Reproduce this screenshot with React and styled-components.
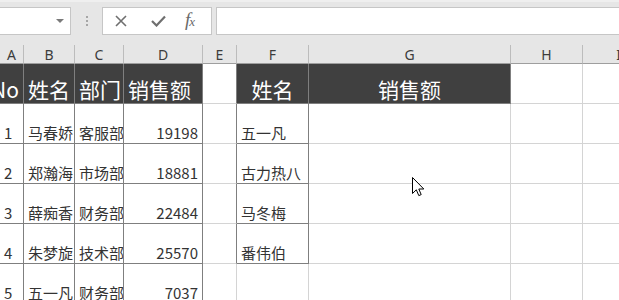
import React from 'react';
import styled, { createGlobalStyle, css } from 'styled-components';

const GlobalStyle = createGlobalStyle`
	html, body {
		margin: 0;
		padding: 0;
		background: #ffffff;
		overflow: hidden;
	}
	body {
		font-family: "Noto Sans", "Noto Sans CJK SC", sans-serif;
	}
`;

const COL_WIDTHS = [24, 51, 49, 79, 34, 72, 202, 72, 72];
const COL_NAMES = ['A', 'B', 'C', 'D', 'E', 'F', 'G', 'H', 'I'];

const GRID = '#d4d4d4';
const TABLE = '#7f7f7f';
const HEAD_FILL = '#404040';

const Page = styled.div`
	width: 619px;
	height: 300px;
	overflow: hidden;
	background: #ffffff;
	display: flex;
	flex-direction: column;
`;

const FormulaBar = styled.div`
	height: 45px;
	flex: none;
	box-sizing: border-box;
	background: #e6e6e6;
	border-top: 2px solid #efefef;
	display: flex;
	align-items: flex-start;
	padding-top: 5px;
`;

const NameBox = styled.div`
	width: 72px;
	height: 28px;
	margin-left: -1px;
	box-sizing: border-box;
	background: #ffffff;
	border: 1px solid #c6c6c6;
	display: flex;
	align-items: center;
	justify-content: flex-end;
	padding-right: 6px;
`;

const DropArrow = styled.span`
	width: 0;
	height: 0;
	border-left: 4px solid transparent;
	border-right: 4px solid transparent;
	border-top: 4px solid #7a7a7a;
`;

const Grip = styled.div`
	width: 31px;
	height: 28px;
	display: flex;
	flex-direction: column;
	align-items: center;
	justify-content: center;
	gap: 2px;
	span {
		width: 2px;
		height: 2px;
		background: #a6a6a6;
	}
`;

const FxButtons = styled.div`
	width: 110px;
	height: 28px;
	box-sizing: border-box;
	background: #ffffff;
	border: 1px solid #c6c6c6;
	display: flex;
	align-items: center;
	padding-left: 12px;
`;

const FxButton = styled.div`
	width: ${ props => props.w }px;
	height: 26px;
	display: flex;
	align-items: center;
	color: #6f6f6f;
`;

const FxText = styled.span`
	font-family: "Liberation Serif", serif;
	font-style: italic;
	font-size: 19px;
	line-height: 20px;
	color: #6a6a6a;
	letter-spacing: -1px;
	span {
		font-size: 13px;
	}
`;

const FormulaInput = styled.div`
	flex: 1;
	height: 28px;
	margin-left: 4px;
	margin-right: -2px;
	box-sizing: border-box;
	background: #ffffff;
	border: 1px solid #c6c6c6;
`;

const Sheet = styled.div`
	position: relative;
	flex: 1;
	display: grid;
	grid-template-columns: ${ COL_WIDTHS.map(w => `${ w }px`).join(' ') };
	grid-template-rows: 19px repeat(6, 40px);
	align-content: start;
`;

const ColHead = styled.div`
	box-sizing: border-box;
	background: #e6e6e6;
	border-right: 1px solid #bcbcbc;
	border-bottom: 1px solid #9e9e9e;
	display: flex;
	align-items: center;
	justify-content: center;
	font-family: "Noto Sans", sans-serif;
	font-size: 14px;
	line-height: 18px;
	color: #3c3c3c;
	padding-top: 1px;
`;

const Cell = styled.div`
	box-sizing: border-box;
	overflow: hidden;
	white-space: nowrap;
	display: flex;
	align-items: flex-end;
	font-family: "Noto Sans CJK SC", "Noto Sans", sans-serif;
	font-size: 15px;
	line-height: 18px;
	color: #333333;
	padding: 0 4px 1px 4px;
	border-right: 1px solid ${ props => props.darkRight ? TABLE : GRID };
	border-bottom: 1px solid ${ props => props.darkBottom ? TABLE : GRID };
	justify-content: ${ props => props.align === 'right' ? 'flex-end' : props.align === 'center' ? 'center' : 'flex-start' };
	${ props => props.head && css`
		background: ${ HEAD_FILL };
		color: #ffffff;
		font-size: 21px;
		line-height: 26px;
		padding-bottom: 1px;
	` }
`;

const Pointer = styled.svg`
	position: absolute;
	left: 412px;
	top: 132px;
	width: 13px;
	height: 20px;
`;

const rows = [
	['No', '姓名', '部门', '销售额', '', '姓名', '销售额', '', ''],
	['1', '马春娇', '客服部', '19198', '', '五一凡', '', '', ''],
	['2', '郑瀚海', '市场部', '18881', '', '古力热八', '', '', ''],
	['3', '薛痴香', '财务部', '22484', '', '马冬梅', '', '', ''],
	['4', '朱梦旋', '技术部', '25570', '', '番伟伯', '', '', ''],
	['5', '五一凡', '财务部', '7037', '', '', '', '', ''],
];

// which cells carry the table's darker border
const inTable = (r, c) =>
	(c <= 3 && r >= 0) || (c === 5 && r >= 0 && r <= 4) || (c === 6 && r === 0);

const isHead = (r, c) => r === 0 && [0, 1, 2, 3, 5, 6].includes(c);

const alignFor = (r, c) => {
	if (r === 0 && c === 0) return 'right';
	if (r === 0 && (c === 5 || c === 6)) return 'center';
	if (c === 3 && r > 0) return 'right';
	return 'left';
};

const App = () => (
	<Page>
		<GlobalStyle />
		<FormulaBar>
			<NameBox><DropArrow /></NameBox>
			<Grip><span /><span /><span /></Grip>
			<FxButtons>
				<FxButton w={36}>
					<svg width="12" height="12" viewBox="0 0 12 12">
						<path d="M1 1 L11 11 M11 1 L1 11" stroke="#6f6f6f" strokeWidth="1.6" fill="none" />
					</svg>
				</FxButton>
				<FxButton w={34}>
					<svg width="15" height="12" viewBox="0 0 15 12">
						<path d="M1 6 L5.5 10.5 L14 1.5" stroke="#6f6f6f" strokeWidth="2.2" fill="none" />
					</svg>
				</FxButton>
				<FxButton w={22}>
					<FxText>f<span>x</span></FxText>
				</FxButton>
			</FxButtons>
			<FormulaInput />
		</FormulaBar>
		<Sheet>
			{ COL_NAMES.map(name => <ColHead key={ name }>{ name }</ColHead>) }
			{ rows.map((row, r) => row.map((text, c) => (
				<Cell
					key={ `${ r }-${ c }` }
					head={ isHead(r, c) }
					align={ alignFor(r, c) }
					darkRight={ inTable(r, c) || inTable(r, c + 1) }
					darkBottom={ inTable(r, c) || inTable(r + 1, c) }
				>
					{ text }
				</Cell>
			))) }
			<Pointer viewBox="0 0 13 20">
				<path d="M0.5 0.5 L0.5 16.5 L4.3 12.8 L6.8 18.6 L9.2 17.6 L6.8 12 L11.8 12 Z" fill="#ffffff" stroke="#000000" strokeWidth="1" strokeLinejoin="miter" />
			</Pointer>
		</Sheet>
	</Page>
);

export default App;
